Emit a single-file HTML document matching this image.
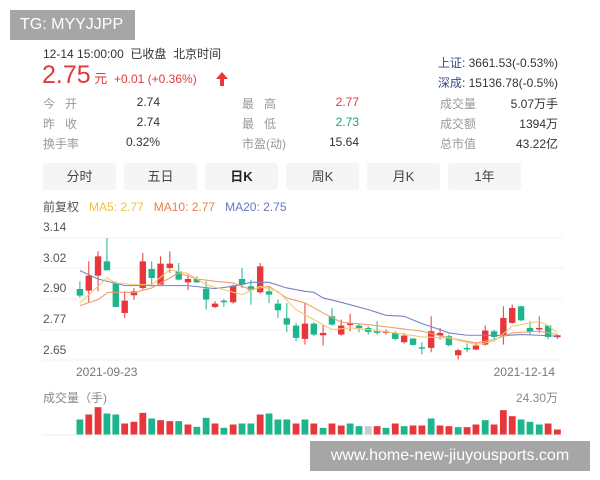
<!DOCTYPE html>
<html><head><meta charset="utf-8">
<style>
*{margin:0;padding:0;box-sizing:border-box}
body{width:600px;height:480px;background:#fff;position:relative;overflow:hidden;font-family:"Liberation Sans","Noto Sans CJK SC",sans-serif;color:#333;font-size:12px}
.a{position:absolute;white-space:nowrap}
.lab{color:#999}
.r{text-align:right}
.tab{position:absolute;top:163px;height:27px;width:73px;background:#f3f5f7;border-radius:3px;text-align:center;line-height:27px;font-size:13px;color:#444}
</style></head><body>
<div class="a" style="left:10px;top:10px;width:125px;height:30px;background:#a6a6a6;color:#fff;font-size:16px;line-height:30px;padding-left:10px">TG: MYYJJPP</div>
<div class="a" style="left:43px;top:45px;font-size:12px;color:#333">12-14 15:00:00&nbsp; 已收盘&nbsp; 北京时间</div>
<div class="a" style="left:42px;top:61px;font-size:25px;color:#e4393c;line-height:28px">2.75<span style="font-size:13px"> 元</span><span style="font-size:12px">&nbsp; +0.01 (+0.36%)</span></div>
<svg class="a" style="left:216px;top:72px" width="12" height="14" viewBox="0 0 12 14"><path d="M6 0 L12 7 L8 7 L8 14 L4 14 L4 7 L0 7Z" fill="#e4393c"/></svg>
<div class="a" style="right:42px;top:54px;color:#333"><span style="color:#3a4a8c">上证</span>: 3661.53(-0.53%)</div>
<div class="a" style="right:42px;top:74px;color:#333"><span style="color:#3a4a8c">深成</span>: 15136.78(-0.5%)</div>

<div class="a lab" style="left:43px;top:95px">今&nbsp;&nbsp; 开</div><div class="a r" style="right:440px;top:95px">2.74</div>
<div class="a lab" style="left:43px;top:115px">昨&nbsp;&nbsp; 收</div><div class="a r" style="right:440px;top:115px">2.74</div>
<div class="a lab" style="left:43px;top:135px">换手率</div><div class="a r" style="right:440px;top:135px">0.32%</div>
<div class="a lab" style="left:242px;top:95px">最&nbsp;&nbsp; 高</div><div class="a r" style="right:241px;top:95px;color:#e4393c">2.77</div>
<div class="a lab" style="left:242px;top:115px">最&nbsp;&nbsp; 低</div><div class="a r" style="right:241px;top:115px;color:#1aa57f">2.73</div>
<div class="a lab" style="left:242px;top:135px">市盈(动)</div><div class="a r" style="right:241px;top:135px">15.64</div>
<div class="a lab" style="left:440px;top:95px">成交量</div><div class="a r" style="right:42px;top:95px">5.07万手</div>
<div class="a lab" style="left:440px;top:115px">成交额</div><div class="a r" style="right:42px;top:115px">1394万</div>
<div class="a lab" style="left:440px;top:135px">总市值</div><div class="a r" style="right:42px;top:135px">43.22亿</div>

<div class="tab" style="left:43px">分时</div>
<div class="tab" style="left:124px">五日</div>
<div class="tab" style="left:205px;font-weight:bold;color:#222">日K</div>
<div class="tab" style="left:286px">周K</div>
<div class="tab" style="left:367px">月K</div>
<div class="tab" style="left:448px">1年</div>

<div class="a" style="left:43px;top:198px;color:#555">前复权&nbsp;&nbsp; <span style="color:#f0c040">MA5: 2.77</span>&nbsp;&nbsp; <span style="color:#e8804a">MA10: 2.77</span>&nbsp;&nbsp; <span style="color:#6b74c0">MA20: 2.75</span></div>

<div class="a" style="left:43px;top:220px;color:#555">3.14</div>
<div class="a" style="left:43px;top:251px;color:#555">3.02</div>
<div class="a" style="left:43px;top:281px;color:#555">2.90</div>
<div class="a" style="left:43px;top:312px;color:#555">2.77</div>
<div class="a" style="left:43px;top:343px;color:#555">2.65</div>
<div class="a" style="left:76px;top:365px;color:#777">2021-09-23</div>
<div class="a r" style="right:45px;top:365px;color:#777">2021-12-14</div>
<div class="a" style="left:43px;top:389px;color:#888">成交量（手)</div>
<div class="a r" style="right:42px;top:389px;color:#888">24.30万</div>

<svg class="a" style="left:0;top:0" width="600" height="480" id="ch"></svg>

<div class="a" style="left:310px;top:441px;width:280px;height:30px;background:#a6a6a6;color:#fff;font-size:16px;line-height:30px;text-align:center">www.home-new-jiuyousports.com</div>

<script>
var c=[[207,'g',208,228,185,235],[230,'r',168,213,125,250],[254,'r',110,168,95,215],[277,'g',125,152,55,152],[300,'g',192,262,185,262],[323,'r',243,280,215,295],[347,'r',215,227,205,240],[370,'r',125,205,100,210],[393,'g',148,175,125,200],[416,'r',132,195,110,195],[440,'r',132,145,95,160],[463,'g',155,180,130,182],[487,'r',178,188,165,212],[510,'g',178,188,170,190],[534,'g',207,240,185,270],[557,'r',252,262,245,265],[580,'g',243,248,238,262],[604,'r',198,248,195,252],[627,'g',178,195,145,205],[650,'g',200,212,180,255],[674,'r',140,218,130,222],[697,'g',215,225,200,250],[720,'g',252,272,240,295],[743,'g',296,315,250,338],[767,'g',318,355,310,365],[790,'r',312,358,250,375],[813,'g',312,345,308,350],[837,'r',340,347,315,378],[860,'g',290,315,265,318],[884,'r',318,345,300,348],[907,'r',312,316,282,335],[930,'g',318,325,312,338],[954,'g',325,337,320,345],[977,'g',335,340,305,345],[1000,'r',335,340,330,345],[1024,'g',340,358,335,362],[1047,'r',348,368,340,372],[1070,'g',357,376,355,378],[1093,'g',383,385,368,405],[1117,'r',335,385,290,398],[1140,'r',340,348,325,360],[1163,'g',350,377,345,380],[1187,'r',392,407,388,420],[1210,'g',385,388,372,398],[1233,'r',378,390,368,392],[1257,'r',333,375,318,378],[1280,'g',335,352,330,358],[1304,'r',295,350,260,375],[1327,'r',265,310,255,312],[1350,'g',260,302,258,305],[1373,'g',325,337,305,345],[1397,'r',325,327,290,340],[1420,'g',318,352,318,358],[1444,'r',347,353,345,358]];
var v=[600,585,563,582,585,612,607,580,597,602,605,605,615,622,595,612,625,615,612,612,585,582,600,600,612,600,612,625,612,618,612,620,620,620,625,612,620,618,618,597,618,620,623,623,615,602,615,572,590,600,607,615,612,630];
var vc='grrggrrrgrrgrggrgrggrgggrgrgrrgg-rgrgrrgrrgrrgrrrgggrr';
var R='#e8373a',G='#1cb58c';
function X(x){return x*0.386}function Y(y){return 219.7+y*0.333}
var s='';
[238,268,299,330,360].forEach(function(y){s+='<line x1="42" x2="563" y1="'+y+'" y2="'+y+'" stroke="#f0f0f0"/>'});
s+='<line x1="42" x2="563" y1="435" y2="435" stroke="#eee"/>';
c.forEach(function(k){var col=k[1]=='r'?R:G,x=X(k[0]);
s+='<line x1="'+x+'" x2="'+x+'" y1="'+Y(k[4])+'" y2="'+Y(k[5])+'" stroke="'+col+'" stroke-width="1"/>';
var t=Y(k[2]),b=Y(k[3]);if(b-t<1.5)b=t+1.5;
s+='<rect x="'+(x-3.2)+'" y="'+t+'" width="6.4" height="'+(b-t)+'" fill="'+col+'"/>';});
v.forEach(function(t,i){var ch=vc[i]||'g';var col=ch=='r'?R:ch=='g'?G:'#ccc';var x=X(c[i][0]);
s+='<rect x="'+(x-3.4)+'" y="'+Y(t)+'" width="6.8" height="'+(Y(645)-Y(t))+'" fill="'+col+'"/>';});
function pl(p,col){return '<polyline fill="none" stroke="'+col+'" stroke-width="1.1" points="'+p.map(function(q){return X(q[0])+','+Y(q[1])}).join(' ')+'"/>'}
s+=pl([[207,153],[254,178],[323,198],[370,198],[487,198],[557,207],[604,200],[650,188],[697,188],[743,205],[790,215],[813,218],[837,235],[884,248],[954,270],[1000,287],[1047,290],[1093,312],[1140,330],[1163,340],[1210,347],[1257,347],[1304,348],[1350,345],[1397,347],[1444,350]],'#7a80c8');
s+=pl([[207,258],[254,240],[280,218],[350,218],[393,205],[463,160],[510,178],[557,185],[604,190],[650,210],[697,200],[743,235],[790,250],[837,280],[884,308],[954,315],[1024,325],[1093,335],[1163,355],[1233,370],[1280,360],[1327,340],[1397,335],[1444,345]],'#eea070');
s+=pl([[207,250],[254,200],[277,175],[300,190],[347,195],[393,195],[440,150],[487,162],[534,195],[580,210],[627,225],[674,200],[720,215],[767,270],[813,300],[860,330],[907,325],[954,330],[1024,340],[1093,352],[1163,355],[1233,375],[1280,365],[1327,320],[1373,310],[1397,305],[1420,318],[1444,340]],'#f2cc70');
document.getElementById('ch').innerHTML=s;
</script>
</body></html>
